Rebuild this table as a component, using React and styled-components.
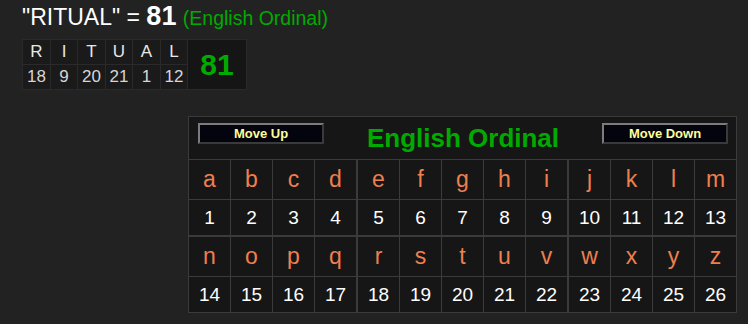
import React from "react";
import styled, { createGlobalStyle } from "styled-components";

const GlobalStyle = createGlobalStyle`
  html, body {
    margin: 0;
    background: #222222;
  }
  body {
    font-family: "Liberation Sans", Arial, Helvetica, sans-serif;
    color: #ffffff;
  }
`;

const LINE = "#3b3b3b";

const Page = styled.div`
  padding: 1px 0 0 22px;
`;

const Heading = styled.h1`
  margin: 0;
  font-size: 23px;
  font-weight: normal;
  line-height: 30px;
  color: #ffffff;
  white-space: nowrap;
`;

const Total = styled.b`
  font-size: 27px;
  font-weight: bold;
`;

const System = styled.span`
  font-size: 19.5px;
  color: #00aa00;
`;

const WordTable = styled.div`
  margin-top: 6px;
  display: inline-grid;
  grid-template-columns: repeat(3, 27px 26px) 58px;
  grid-template-rows: 24px 24px;
  gap: 1px;
  border: 1px solid #2a2a2a;
  background: #2a2a2a;
  vertical-align: top;
`;

const WordCell = styled.div`
  display: flex;
  align-items: center;
  justify-content: center;
  background: #1a1a1a;
  font-size: 17px;
  color: ${(p) => (p.$letter ? "#e8e8e8" : "#d6d6d6")};
`;

const WordTotal = styled.div`
  grid-column: ${(p) => p.$col};
  grid-row: 1 / span 2;
  display: flex;
  align-items: center;
  justify-content: center;
  background: #151515;
  font-size: 30px;
  font-weight: bold;
  color: #00aa00;
`;

const Panel = styled.div`
  box-sizing: border-box;
  margin: 26px 0 0 166px;
  width: 549px;
  border: 1px solid ${LINE};
  background: #161616;
`;

const Header = styled.div`
  height: 42px;
  display: grid;
  grid-template-columns: 126px 1fr 126px;
  align-items: center;
  padding: 0 8px 0 9px;
  border-bottom: 1px solid ${LINE};
`;

const ShiftButton = styled.button`
  box-sizing: border-box;
  align-self: start;
  height: 21px;
  width: 126px;
  padding: 0;
  margin-top: 6px;
  background: #04040e;
  border-style: solid;
  border-width: 2px;
  border-color: #7c7c7c #3a3a3a #3a3a3a #7c7c7c;
  font-family: "Liberation Sans", Arial, sans-serif;
  font-size: 13px;
  font-weight: bold;
  color: #ffff99;
  cursor: pointer;
`;

const Title = styled.div`
  text-align: center;
  font-size: 26px;
  font-weight: bold;
  color: #00aa00;
`;

const Block = styled.div`
  display: flex;
  & + & {
    border-top: 1px solid ${LINE};
  }
  &:not(:last-child) {
    border-bottom: 1px solid ${LINE};
  }
`;

const Group = styled.div`
  display: grid;
  grid-template-columns: repeat(${(p) => p.$size}, 41px);
  grid-template-rows: 39px 35px;
  grid-auto-flow: row;
  gap: 1px;
  background: ${LINE};
  & + & {
    border-left: 1px solid ${LINE};
  }
  &:not(:last-child) {
    border-right: 1px solid ${LINE};
  }
`;

const Cell = styled.div`
  display: flex;
  align-items: center;
  justify-content: center;
  background: #161616;
  font-size: ${(p) => (p.$letter ? "23px" : "19px")};
  color: ${(p) => (p.$letter ? "#ee7f4f" : "#ffffff")};
`;

const WORD = "RITUAL";
const ALPHABET = "abcdefghijklmnopqrstuvwxyz".split("");
const GROUP_SIZES = [4, 5, 4];

const valueOf = (ch) => ch.toLowerCase().charCodeAt(0) - 96;

function buildBlocks() {
  const halves = [ALPHABET.slice(0, 13), ALPHABET.slice(13)];
  return halves.map((half) => {
    let start = 0;
    return GROUP_SIZES.map((size) => {
      const part = half.slice(start, start + size);
      start += size;
      return part;
    });
  });
}

export default function App() {
  const letters = WORD.split("");
  const total = letters.reduce((sum, ch) => sum + valueOf(ch), 0);
  const blocks = buildBlocks();

  return (
    <>
      <GlobalStyle />
      <Page>
        <Heading>
          "{WORD}" = <Total>{total}</Total> <System>(English Ordinal)</System>
        </Heading>
        <WordTable>
          {letters.map((ch, i) => (
            <WordCell key={`l${i}`} $letter>
              {ch}
            </WordCell>
          ))}
          <WordTotal $col={letters.length + 1}>{total}</WordTotal>
          {letters.map((ch, i) => (
            <WordCell key={`n${i}`}>{valueOf(ch)}</WordCell>
          ))}
        </WordTable>
        <Panel>
          <Header>
            <ShiftButton>Move Up</ShiftButton>
            <Title>English Ordinal</Title>
            <ShiftButton>Move Down</ShiftButton>
          </Header>
          {blocks.map((groups, b) => (
            <Block key={b}>
              {groups.map((group, g) => (
                <Group key={g} $size={group.length}>
                  {group.map((ch) => (
                    <Cell key={ch} $letter>
                      {ch}
                    </Cell>
                  ))}
                  {group.map((ch) => (
                    <Cell key={`${ch}-v`}>{valueOf(ch)}</Cell>
                  ))}
                </Group>
              ))}
            </Block>
          ))}
        </Panel>
      </Page>
    </>
  );
}
